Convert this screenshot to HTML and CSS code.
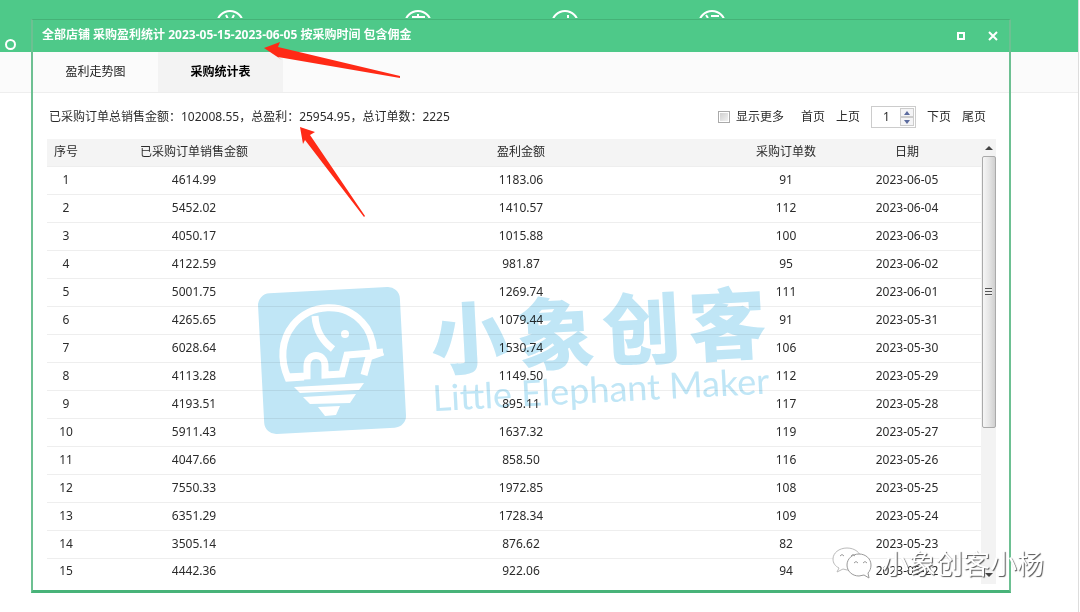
FILE: index.html
```html
<!DOCTYPE html>
<html lang="zh-CN">
<head>
  <meta charset="UTF-8">
  <title>采购盈利统计</title>
  <link rel="stylesheet" href="styles.css">
</head>
<body>

  <div class="page">
    <div class="topbar">
      <span class="dot"></span>
      <svg class="nav-icons" viewBox="0 0 520 18" width="520" height="18">
        <g fill="none" stroke="#fff" stroke-width="2">
          <circle cx="19" cy="24" r="13"/>
          <path d="M15 15l2 4M23 15l-2 4"/>
          <circle cx="207" cy="24" r="13"/>
          <path d="M207 14v4M201 17h13"/>
          <circle cx="354" cy="24" r="13"/>
          <path d="M357 15v3"/>
          <circle cx="501" cy="24" r="13"/>
          <path d="M495 15l2 3M500 16h8"/>
        </g>
      </svg>
    </div>
    <div class="subbar"></div>
  </div>

  <div class="dialog">
    <div class="dialog-header">
      <h1>全部店铺 采购盈利统计 2023-05-15-2023-06-05 按采购时间 包含佣金</h1>
      <button type="button" aria-label="最大化">
        <svg width="10" height="10" viewBox="0 0 10 10"><rect x="2" y="2" width="6" height="6" fill="none" stroke="#fff" stroke-width="2"/></svg>
      </button>
      <button type="button" aria-label="关闭">
        <svg width="10" height="10" viewBox="0 0 10 10"><path d="M1 1l8 8M9 1l-8 8" fill="none" stroke="#fff" stroke-width="2"/></svg>
      </button>
    </div>

    <div class="tabs">
      <button type="button" class="tab">盈利走势图</button>
      <button type="button" class="tab active">采购统计表</button>
    </div>

    <div class="toolbar">
      <p class="summary">已采购订单总销售金额：102008.55，总盈利：25954.95，总订单数：2225</p>
      <label class="more"><input type="checkbox"> 显示更多</label>
      <nav class="pager">
        <a href="#first">首页</a>
        <a href="#prev">上页</a>
        <div class="spinner">
          <input type="text" value="1" aria-label="页码">
          <div class="steps">
            <button type="button" aria-label="增加"><svg width="6" height="4" viewBox="0 0 6 4"><path d="M0 4l3-4 3 4z" fill="#5b6b9e"/></svg></button>
            <button type="button" aria-label="减少"><svg width="6" height="4" viewBox="0 0 6 4"><path d="M0 0l3 4 3-4z" fill="#5b6b9e"/></svg></button>
          </div>
        </div>
        <a href="#next">下页</a>
        <a href="#last">尾页</a>
      </nav>
    </div>

    <div class="grid">
      <table>
        <colgroup>
          <col class="c-no"><col class="c-sales"><col><col class="c-orders"><col class="c-date">
        </colgroup>
        <thead>
          <tr><th>序号</th><th>已采购订单销售金额</th><th>盈利金额</th><th>采购订单数</th><th>日期</th></tr>
        </thead>
        <tbody>
          <tr><td>1</td><td>4614.99</td><td>1183.06</td><td>91</td><td>2023-06-05</td></tr>
          <tr><td>2</td><td>5452.02</td><td>1410.57</td><td>112</td><td>2023-06-04</td></tr>
          <tr><td>3</td><td>4050.17</td><td>1015.88</td><td>100</td><td>2023-06-03</td></tr>
          <tr><td>4</td><td>4122.59</td><td>981.87</td><td>95</td><td>2023-06-02</td></tr>
          <tr><td>5</td><td>5001.75</td><td>1269.74</td><td>111</td><td>2023-06-01</td></tr>
          <tr><td>6</td><td>4265.65</td><td>1079.44</td><td>91</td><td>2023-05-31</td></tr>
          <tr><td>7</td><td>6028.64</td><td>1530.74</td><td>106</td><td>2023-05-30</td></tr>
          <tr><td>8</td><td>4113.28</td><td>1149.50</td><td>112</td><td>2023-05-29</td></tr>
          <tr><td>9</td><td>4193.51</td><td>895.11</td><td>117</td><td>2023-05-28</td></tr>
          <tr><td>10</td><td>5911.43</td><td>1637.32</td><td>119</td><td>2023-05-27</td></tr>
          <tr><td>11</td><td>4047.66</td><td>858.50</td><td>116</td><td>2023-05-26</td></tr>
          <tr><td>12</td><td>7550.33</td><td>1972.85</td><td>108</td><td>2023-05-25</td></tr>
          <tr><td>13</td><td>6351.29</td><td>1728.34</td><td>109</td><td>2023-05-24</td></tr>
          <tr><td>14</td><td>3505.14</td><td>876.62</td><td>82</td><td>2023-05-23</td></tr>
          <tr><td>15</td><td>4442.36</td><td>922.06</td><td>94</td><td>2023-05-22</td></tr>
        </tbody>
      </table>
      <div class="scrollbar">
        <svg width="8" height="4" viewBox="0 0 8 4"><path d="M0 4l4-4 4 4z" fill="#444"/></svg>
        <div class="thumb"><i></i></div>
        <svg class="down" width="8" height="4" viewBox="0 0 8 4"><path d="M0 0l4 4 4-4z" fill="#444"/></svg>
      </div>
    </div>
  </div>

  <!-- brand watermark -->
  <svg class="watermark" width="530" height="170" viewBox="250 275 530 170">
    <g fill="#c0e6f6">
      <rect x="261" y="290" width="142" height="141" rx="12" transform="rotate(-3 332 360)"/>
      <g transform="rotate(-3 436 366)">
        <text class="wm-cn" x="432 518 604 690" y="369">小象创客</text>
        <text class="wm-en" x="431" y="411">Little Elephant Maker</text>
      </g>
    </g>
    <g fill="none" stroke="#fff" stroke-width="7">
      <path d="M304 377l-16 1c-8-18-7-38 5-53 18-22 51-23 69-3 8 8 11 18 12 31"/>
      <path d="M315 316c1 14 6 24 18 33"/>
      <path d="M286 377l21-1v-10c0-14 18-14 18 0v9l17-1 5-19 36-3"/>
      <path d="M383 352l-14 5-5 18"/>
    </g>
    <g fill="#fff">
      <circle cx="345" cy="334" r="4"/>
      <path d="M294 387l70-4-5 7-59 3zM303 397l53-3-6 9-40 1zM318 407l22-1-4 9-11 1z"/>
    </g>
  </svg>

  <svg class="arrows" width="140" height="180" viewBox="262 40 140 180">
    <g fill="#ff2a16">
      <path d="M264 48l16-6-2 5 122 29v2l-122-21 4 3z"/>
      <path d="M300 127l15 5-5 3 55 81-1 1-59-77-2 4z"/>
    </g>
  </svg>

  <div class="signature">
    <svg width="40" height="32" viewBox="0 0 40 32">
      <g fill="#fff" stroke="#9a9a9a" stroke-width="1">
        <path d="M15 1C7 1 1 6 1 12c0 4 2 7 6 9l-2 4 6-3 4 1c8 0 14-5 14-11S23 1 15 1z" stroke="#bbb"/>
        <path d="M27 7c-7 0-12 5-12 11s5 11 12 11l5-1 5 3-1-5c2-2 3-5 3-8 0-6-5-11-12-11z"/>
        <path d="M8 9q2-3 4 0M19 9q2-3 4 0M22 16q2-3 4 0M31 16q2-3 4 0" fill="none"/>
      </g>
    </svg>
    <span>小象创客小杨</span>
  </div>

</body>
</html>
```
FILE: styles.css
```css
* {
  box-sizing: border-box;
}
body {
  margin: 0;
  position: relative;
  font-family: "Noto Sans", "Noto Sans CJK SC", sans-serif;
  font-size: 12px;
  line-height: 18px;
  color: #2b2b2b;
  background: #fff;
}
button {
  font: inherit;
  color: inherit;
  border: none;
  background: none;
  padding: 0;
  cursor: pointer;
}

/* page behind the dialog */
.page {
  min-height: 100vh;
  margin-right: 1px;
  border-right: 1px solid #ddd;
}
.topbar {
  height: 52px;
  background: #4ec989;
  display: flex;
  align-items: flex-start;
  padding-left: 5px;
}
.dot {
  width: 11px;
  height: 11px;
  margin-top: 39px;
  border: 2px solid #fff;
  border-radius: 50%;
}
.nav-icons {
  margin-left: 195px;
}
.subbar {
  height: 41px;
  background: #fbfbfb;
  border-bottom: 1px solid #eee;
}

/* dialog window */
.dialog {
  position: absolute;
  top: 19px;
  left: 31px;
  right: 69px;
  background: #fff;
  border: 2px solid #6dc092;
  border-top: 1px solid #45b277;
  border-bottom: 3px solid #48b379;
  padding-bottom: 6px;
}
.dialog-header {
  height: 32px;
  display: flex;
  align-items: center;
  gap: 22px;
  padding: 0 11px 0 9px;
  background: #4ec989;
  color: #fff;
}
.dialog-header h1 {
  flex: 1;
  margin: 0;
  padding-bottom: 2px;
  font-size: 12px;
  font-weight: 700;
}
.dialog-header button {
  display: flex;
}
.tabs {
  height: 41px;
  display: flex;
  background: #fbfbfb;
  border-bottom: 1px solid #eee;
}
.tab {
  width: 125px;
  color: #222;
}
.tab.active {
  background: #f3f3f3;
  color: #000;
  font-weight: 700;
}
.toolbar {
  height: 46px;
  display: flex;
  align-items: center;
  padding: 2px 23px 0 16px;
}
.summary {
  flex: 1;
  margin: 0;
}
.more {
  display: flex;
  align-items: center;
  gap: 6px;
  margin-right: 17px;
}
.more input {
  appearance: none;
  width: 12px;
  height: 12px;
  margin: 0;
  border: 1px solid #aaa;
  background: linear-gradient(135deg, #ccc, #f6f6f6);
  box-shadow: inset 0 0 0 1px #fff;
}
.pager {
  display: flex;
  align-items: center;
  gap: 11px;
}
.pager a {
  color: #2b2b2b;
  text-decoration: none;
}
.spinner {
  display: flex;
  width: 45px;
  height: 22px;
  padding: 1px;
  border: 1px solid #ccc;
}
.spinner input {
  flex: 1;
  min-width: 0;
  padding: 0;
  border: none;
  font: inherit;
  color: inherit;
  text-align: center;
}
.steps {
  width: 14px;
  display: flex;
  flex-direction: column;
}
.steps button {
  flex: 1;
  display: flex;
  align-items: center;
  justify-content: center;
  border: 1px solid #ccc;
  background: #f4f4f6;
}

/* statistics table */
.grid {
  display: flex;
  padding: 0 13px 0 14px;
}
table {
  flex: 1;
  table-layout: fixed;
  border-collapse: collapse;
}
.c-no {
  width: 38px;
}
.c-sales {
  width: 218px;
}
.c-orders {
  width: 94px;
}
.c-date {
  width: 148px;
}
th,
td {
  height: 28px;
  padding: 0;
  text-align: center;
  border-bottom: 1px solid #eee;
}
th {
  height: 27px;
  font-weight: 400;
  background: #f4f4f4;
}
tbody tr:last-child td {
  height: 26px;
  border-bottom: none;
}
.scrollbar {
  width: 15px;
  display: flex;
  flex-direction: column;
  align-items: center;
  padding: 7px 0;
  background: #f3f3f3;
}
.thumb {
  width: 14px;
  height: 272px;
  margin-top: 6px;
  display: flex;
  align-items: center;
  justify-content: center;
  border: 1px solid #aaa;
  border-radius: 2px;
  background: linear-gradient(90deg, #f6f6f6, #e6e6e6 50%, #cfcfcf);
}
.thumb i {
  width: 7px;
  height: 8px;
  background: repeating-linear-gradient(#555 0 1px, #eee 1px 3px);
}
.down {
  margin-top: auto;
}

/* marks drawn over everything */
.watermark {
  position: absolute;
  top: 275px;
  left: 250px;
  mix-blend-mode: multiply;
  pointer-events: none;
}
.wm-cn {
  font-family: "Noto Sans CJK SC", sans-serif;
  font-size: 78px;
  font-weight: 900;
}
.wm-en {
  font-family: Lato, sans-serif;
  font-size: 36px;
}
.arrows {
  position: absolute;
  top: 40px;
  left: 262px;
  pointer-events: none;
}
.signature {
  position: absolute;
  top: 545px;
  right: 36px;
  display: flex;
  align-items: center;
  gap: 10px;
  pointer-events: none;
}
.signature span {
  font-family: "Noto Sans CJK SC", sans-serif;
  font-size: 27px;
  line-height: 36px;
  color: #fff;
  text-shadow: 1px 1px 1px #555;
}
```
